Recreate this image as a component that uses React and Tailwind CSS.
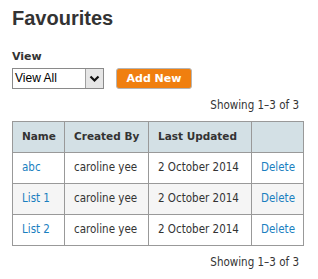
import React from "react";

// ── Data ───────────────────────────────────────────────────────────────────────
const LISTS = [
  { name: "abc", createdBy: "caroline yee", updated: "2 October 2014" },
  { name: "List 1", createdBy: "caroline yee", updated: "2 October 2014" },
  { name: "List 2", createdBy: "caroline yee", updated: "2 October 2014" },
];

const BODY_FONT = "font-['DejaVu_Sans_Condensed','DejaVu_Sans',sans-serif] text-[11.5px]";
const BOLD_FONT = "font-['DejaVu_Sans',sans-serif] font-bold text-[10.5px]";

function Showing() {
  return (
    <div className={`pr-[19px] text-right leading-[14px] text-[#333] ${BODY_FONT}`}>
      Showing 1–3 of 3
    </div>
  );
}

// Fake select box (native one renders differently per platform)
function ViewSelect() {
  return (
    <div className="flex h-[21px] w-[92px] border border-[#8a8a8a] bg-white">
      <span className="flex-1 pl-[2px] font-['Liberation_Sans',sans-serif] text-[12px] leading-[19px] text-black">
        View All
      </span>
      <span className="flex w-[18px] items-center justify-center border-l border-[#a0a0a0] bg-[#e6e6e6]">
        <svg width="11" height="8" viewBox="0 0 11 8">
          <path d="M1.5 1.5 L5.5 5.5 L9.5 1.5" fill="none" stroke="#111" strokeWidth="2.2" />
        </svg>
      </span>
    </div>
  );
}

export default function App() {
  return (
    <div className="w-[318px] bg-white pt-[6px] text-[#333]">
      <div className="pl-3">
        <h1 className="font-['Liberation_Sans',sans-serif] text-[20px] font-bold leading-6 text-[#333]">
          Favourites
        </h1>

        <div className="mt-[20px] font-['DejaVu_Sans',sans-serif] text-[11px] font-bold leading-[14px] text-[#333]">
          View
        </div>

        <div className="mt-[4px] flex items-center gap-[12px]">
          <ViewSelect />
          <button className="h-[21px] w-[76px] rounded-[3px] border border-[#b5b5b5] bg-[#f07f0f] font-['DejaVu_Sans',sans-serif] text-[11px] font-bold leading-[19px] text-white">
            Add New
          </button>
        </div>
      </div>

      <div className="mt-[9px]">
        <Showing />
      </div>

      <div className="mt-[9px] pl-3">
        <table className="w-[291px] table-fixed border-collapse border border-[#999]">
          <thead>
            <tr className="h-[31px] bg-[#d3e0e5]">
              <th className={`w-[52px] border border-[#999] pl-[9px] text-left ${BOLD_FONT}`}>Name</th>
              <th className={`w-[84px] border border-[#999] pl-[9px] text-left ${BOLD_FONT}`}>Created By</th>
              <th className={`w-[103px] border border-[#999] pl-[9px] text-left ${BOLD_FONT}`}>Last Updated</th>
              <th className="w-[52px] border border-[#999]"></th>
            </tr>
          </thead>
          <tbody>
            {LISTS.map((row, i) => (
              <tr key={row.name} className={`h-[31px] ${i % 2 === 1 ? "bg-[#f5f5f5]" : "bg-white"}`}>
                <td className={`border border-[#999] pl-[9px] text-[#1a7fbf] ${BODY_FONT}`}>{row.name}</td>
                <td className={`border border-[#999] pl-[9px] ${BODY_FONT}`}>{row.createdBy}</td>
                <td className={`border border-[#999] pl-[9px] ${BODY_FONT}`}>{row.updated}</td>
                <td className={`border border-[#999] pl-[9px] text-[#1a7fbf] ${BODY_FONT}`}>Delete</td>
              </tr>
            ))}
          </tbody>
        </table>
      </div>

      <div className="mt-[9px]">
        <Showing />
      </div>
    </div>
  );
}
